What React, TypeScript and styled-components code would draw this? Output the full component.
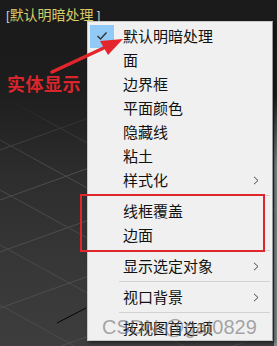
import styled, { createGlobalStyle } from 'styled-components';

const GlobalStyle = createGlobalStyle`
  html, body {
    margin: 0;
    padding: 0;
    background: #1b1b1b;
  }
`;

type Item = {
  label: string;
  checked?: boolean;
  sub?: boolean;
  sepBefore?: boolean;
};

const items: Item[] = [
  { label: '默认明暗处理', checked: true },
  { label: '面' },
  { label: '边界框' },
  { label: '平面颜色' },
  { label: '隐藏线' },
  { label: '粘土' },
  { label: '样式化', sub: true },
  { label: '线框覆盖', sepBefore: true },
  { label: '边面' },
  { label: '显示选定对象', sub: true, sepBefore: true },
  { label: '视口背景', sub: true, sepBefore: true },
  { label: '按视图首选项', sepBefore: true },
];

const gridA = [150, 200, 252, 308, 368, 430];
const gridB = [95, 140, 190, 245, 305];

const App = () => {
  return (
    <>
      <GlobalStyle />
      <Viewport>
        <Grid width="277" height="346" viewBox="0 0 277 346">
          {gridA.map((c) => (
            <line key={'a' + c} x1={0} y1={c} x2={277} y2={c - 0.36 * 277} stroke="#4e4e4e" strokeWidth="1" />
          ))}
          {gridB.map((c) => (
            <line key={'b' + c} x1={0} y1={c} x2={277} y2={c + 0.55 * 277} stroke="#4b4b4b" strokeWidth="1" />
          ))}
          <line x1={57} y1={323} x2={86} y2={308} stroke="#050505" strokeWidth="1" />
          <rect x={274} y={98} width={3} height={248} fill="#7d8b8b" />
        </Grid>

        <ViewLabel>
          <Bracket>[</Bracket>默认明暗处理 <Bracket>]</Bracket>
        </ViewLabel>

        <Menu>
          {items.map((it) => (
            <div key={it.label}>
              {it.sepBefore && <Separator />}
              <Row>
                <CheckCell checked={!!it.checked}>
                  {it.checked && (
                    <svg width="12" height="10" viewBox="0 0 12 10">
                      <path d="M1.5 5 L4.5 8 L10.5 1.5" fill="none" stroke="#333" strokeWidth="1.4" />
                    </svg>
                  )}
                </CheckCell>
                <Label>{it.label}</Label>
                {it.sub && (
                  <Chevron width="6" height="9" viewBox="0 0 6 9">
                    <path d="M1 0.8 L5 4.5 L1 8.2" fill="none" stroke="#444" strokeWidth="1" />
                  </Chevron>
                )}
              </Row>
            </div>
          ))}
        </Menu>

        <Annotation>实体显示</Annotation>
        <Arrow width="277" height="346" viewBox="0 0 277 346">
          <line x1={52} y1={72} x2={108} y2={46} stroke="#e4262c" strokeWidth="3.5" strokeLinecap="round" />
          <polygon points="123,39 100,41 108,55" fill="#e4262c" />
        </Arrow>
        <Highlight />
        <Watermark>CSDN @gat0829</Watermark>
      </Viewport>
    </>
  );
};

export default App;

const Viewport = styled.div`
  position: relative;
  width: 277px;
  height: 346px;
  overflow: hidden;
  background: linear-gradient(180deg, #1a1a1a 0%, #1d1d1d 25%, #2d2d2d 50%, #383838 80%, #3d3d3d 100%);
  padding: 5px 0 0 6px;
  box-sizing: border-box;
`;

const Grid = styled.svg`
  position: absolute;
  left: 0;
  top: 0;
  -webkit-mask-image: linear-gradient(180deg, transparent 0%, transparent 28%, #000 48%);
  mask-image: linear-gradient(180deg, transparent 0%, transparent 28%, #000 48%);
`;

const ViewLabel = styled.div`
  position: relative;
  font-family: 'Noto Sans CJK SC', 'Liberation Sans', sans-serif;
  font-size: 14px;
  line-height: 18px;
  color: #d8cb68;
  white-space: pre;
`;

const Bracket = styled.span`
  color: #c9c9c9;
  font-family: 'Liberation Sans', sans-serif;
  font-size: 13px;
`;

const Menu = styled.div`
  position: absolute;
  left: 87px;
  top: 21px;
  width: 186px;
  height: 320px;
  box-sizing: border-box;
  padding: 2px 2px 0 2px;
  background: #f0f0f0;
  border: 1px solid #c8c8c8;
  border-right-color: #9a9a9a;
  box-shadow: 2px 2px 3px rgba(0, 0, 0, 0.45);
  font-family: 'Noto Sans CJK SC', 'Liberation Sans', sans-serif;
  font-size: 15px;
  color: #111;
`;

const Row = styled.div`
  display: flex;
  align-items: center;
  height: 24px;
`;

const CheckCell = styled.div<{ checked: boolean }>`
  width: 24px;
  height: 23px;
  margin-right: 9px;
  display: flex;
  align-items: center;
  justify-content: center;
  background: ${({ checked }) => (checked ? '#91c9f7' : 'transparent')};
`;

const Label = styled.span`
  flex: 1;
  line-height: 24px;
  white-space: nowrap;
`;

const Chevron = styled.svg`
  margin-right: 11px;
`;

const Separator = styled.div`
  height: 7px;
  margin-left: 29px;
  display: flex;
  align-items: center;

  &::before {
    content: '';
    flex: 1;
    height: 1px;
    background: #d2d2d2;
  }
`;

const Annotation = styled.div`
  position: absolute;
  left: 7px;
  top: 70px;
  font-family: 'Noto Sans CJK SC', 'Liberation Serif', serif;
  font-weight: 700;
  font-size: 18px;
  letter-spacing: 0.5px;
  color: #d8262c;
`;

const Arrow = styled.svg`
  position: absolute;
  left: 0;
  top: 0;
  pointer-events: none;
`;

const Highlight = styled.div`
  position: absolute;
  left: 80px;
  top: 194px;
  width: 185px;
  height: 58px;
  box-sizing: border-box;
  border: 2px solid #e0262d;
`;

const Watermark = styled.div`
  position: absolute;
  left: 102px;
  top: 315px;
  font-family: 'Liberation Sans', sans-serif;
  font-size: 20px;
  line-height: 24px;
  color: rgba(110, 110, 110, 0.6);
  white-space: nowrap;
`;
